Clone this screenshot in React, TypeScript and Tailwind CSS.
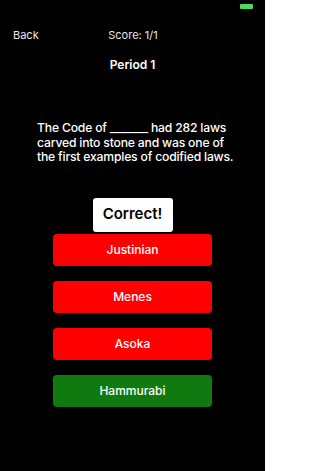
const answers = [
  { label: 'Justinian', correct: false },
  { label: 'Menes', correct: false },
  { label: 'Asoka', correct: false },
  { label: 'Hammurabi', correct: true },
]

export default function App() {
  return (
    <div
      className="w-[265px] h-[471px] bg-black text-white flex flex-col"
      style={{ fontFamily: 'Inter, "Liberation Sans", sans-serif' }}
    >
      {/* Status bar */}
      <div className="h-[14px] flex justify-end items-start pt-[4px] pr-[12px]">
        <div className="w-[13px] h-[5px] rounded-[1px] bg-[#4cd964]" />
      </div>

      {/* Nav */}
      <div className="relative h-[14px] mt-[14px] flex items-center text-[11px] text-[#e8e8e8]">
        <span className="pl-[13px]">Back</span>
        <span className="absolute left-0 right-0 text-center pl-[1px]">Score: 1/1</span>
      </div>

      <div className="mt-[14px] text-center text-[12px] font-semibold">Period 1</div>

      <p className="mt-[47px] pl-[37px] pr-[24px] text-[12.2px] leading-[14.5px] font-medium tracking-[-0.2px]">
        The Code of _______ had 282 laws carved into stone and was one of the first examples of codified laws.
      </p>

      <div className="mt-[33px] flex justify-center">
        <div className="w-[80px] h-[34px] bg-white rounded-[3px] flex items-center justify-center text-black text-[15px] font-semibold">
          Correct!
        </div>
      </div>

      <div className="mt-[2px] flex flex-col gap-[15px] px-[53px]">
        {answers.map((a) => (
          <button
            key={a.label}
            className={`h-[32px] rounded-[4px] text-[12px] font-medium text-white ${
              a.correct ? 'bg-[#0f7a10]' : 'bg-[#ff0000]'
            }`}
          >
            {a.label}
          </button>
        ))}
      </div>
    </div>
  )
}
